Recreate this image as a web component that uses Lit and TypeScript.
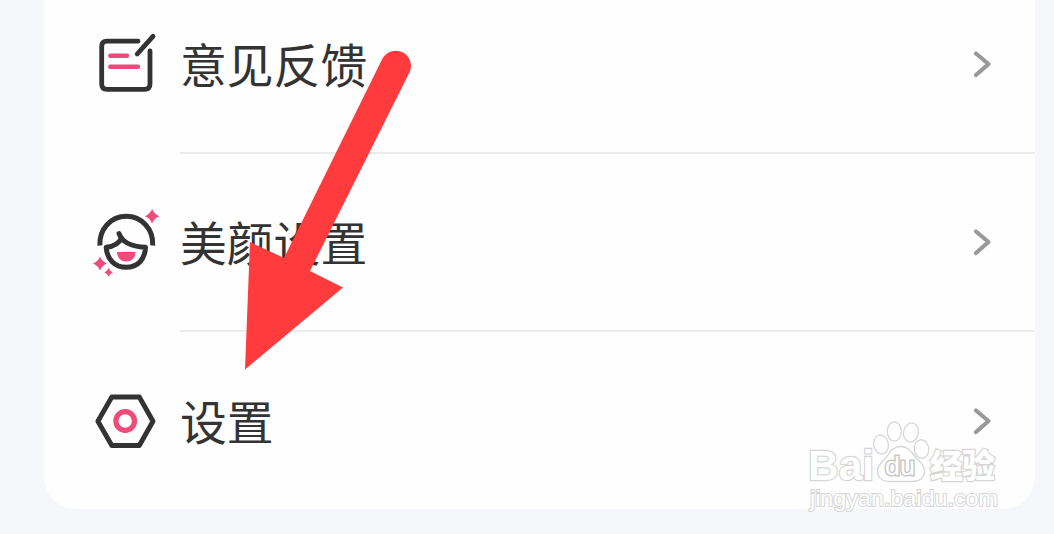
import { LitElement, html, css, svg } from "lit";
import { customElement, property } from "lit/decorators.js";

const feedbackIcon = svg`
    <g fill="none" stroke-width="4.800" stroke-linecap="round" stroke-linejoin="round">
        <path stroke="#333" d="M53 21.200H22Q16.700 21.200 16.700 26.500V64Q16.700 69.300 22 69.300H59.500Q65 69.300 65 64V31M68 16.300L52.200 34" />
        <path stroke="#e94c7c" stroke-width="4.400" d="M25.300 35.800H42M25.300 46.800H53" />
    </g>
`;

const beautyIcon = svg`
    <g fill="none" stroke="#333" stroke-width="5" stroke-linecap="round" stroke-linejoin="round">
        <path stroke-linecap="butt" d="M14.900 45.500C14 29 26 16.300 41.300 16.300S68.600 29 67.700 45.500" />
        <path d="M34 33.500C37 42 47 46.700 60.500 47.300C60 59 53 67.300 41.300 67.300S21.900 59 21.200 47.300C28 46.500 34 43.500 36.200 38.500" />
    </g>
    <g fill="#f04b7b">
        <path d="M32 52H50.500C50.300 58 46.500 61.500 41.300 61.500S32.300 58 32 52Z" />
        <path d="M67.100 9Q69.200 14.100 74.300 16.200Q69.200 18.300 67.100 23.400Q65 18.300 59.900 16.200Q65 14.100 67.100 9Z" />
        <path d="M15 56.600Q17 61.600 21.800 63.600Q17 65.600 15 70.600Q13 65.600 8 63.600Q13 61.600 15 56.600Z" />
        <path d="M23.600 68Q24.900 71 27.900 72.300Q24.900 73.600 23.600 76.600Q22.300 73.600 19.300 72.300Q22.300 71 23.600 68Z" />
    </g>
`;

const settingsIcon = svg`
    <g fill="none">
        <path stroke="#333" stroke-width="4.900" stroke-linejoin="round" d="M26.800 17H54.300L68 41.300L54.300 65.500H26.800L12.900 41.300Z" />
        <circle cx="40.200" cy="41" r="9.300" stroke="#f04b7b" stroke-width="5.200" />
    </g>
`;

@customElement("menu-row")
class MenuRow extends LitElement {
    @property() label = "";
    @property() box = "0 0 90 90";
    @property({ attribute: false }) icon: unknown;

    static styles = css`
        :host {
            display: flex;
            box-sizing: border-box;
            height: 178px;
            padding-left: 41px;
        }
        :host(:last-child) {
            margin-top: 1px;
        }
        .icon {
            flex: none;
            width: 90px;
            height: 90px;
            margin: 43px 5px 0 0;
        }
        .body {
            flex: 1;
            display: flex;
            align-items: center;
            justify-content: space-between;
            padding-right: 41px;
            border-bottom: 2px solid #ececec;
        }
        :host(:last-child) .body {
            border-bottom-color: transparent;
        }
        .label {
            font-size: 46.8px;
            line-height: 60px;
            padding-bottom: 2px;
            color: #333;
            white-space: nowrap;
        }
        .chevron {
            width: 24px;
            height: 32px;
        }
    `;

    render() {
        return html`
            <svg class="icon" viewBox=${this.box}>${this.icon}</svg>
            <div class="body">
                <span class="label">${this.label}</span>
                <svg class="chevron" viewBox="0 0 24 32">
                    <path d="M6 5.500L18.500 16L6 27" fill="none" stroke="#999" stroke-width="4.200" stroke-linecap="round" stroke-linejoin="round" />
                </svg>
            </div>
        `;
    }
}

@customElement("app-root")
class AppRoot extends LitElement {
    static styles = css`
        :host {
            display: block;
            position: relative;
            box-sizing: border-box;
            height: 534px;
            padding: 0 19px 25px 44px;
            overflow: hidden;
            background: #f5f7fb;
            font-family: "Noto Sans CJK SC", sans-serif;
        }
        .card {
            height: 509px;
            overflow: hidden;
            border-radius: 0 0 32px 32px;
            background: #fefefe;
        }
        .list {
            margin-top: -24px;
        }
        .overlay {
            position: absolute;
            inset: 0;
            width: 1054px;
            height: 534px;
            pointer-events: none;
        }
        .mark {
            fill: #fff;
            stroke: #d6d6d6;
            stroke-width: 1.3;
        }
        .mark text {
            font-family: "Liberation Sans", sans-serif;
            paint-order: stroke;
            stroke-width: 2.4;
        }
        .mark .brand {
            font-weight: bold;
            font-size: 43px;
        }
        .mark .cn {
            font-family: "Noto Sans CJK SC", sans-serif;
            font-weight: 900;
            font-size: 33px;
        }
        .mark .du {
            font-size: 26px;
            stroke: #c8c8c8;
            stroke-width: 3;
        }
        .mark .url {
            font-size: 22.5px;
            stroke-width: 2;
        }
    `;

    render() {
        return html`
            <div class="card">
                <div class="list">
                    <menu-row label="意见反馈" box="0 -1 90 90" .icon=${feedbackIcon}></menu-row>
                    <menu-row label="美颜设置" box="0 -3 90 90" .icon=${beautyIcon}></menu-row>
                    <menu-row label="设置" box="0 -4 90 90" .icon=${settingsIcon}></menu-row>
                </div>
            </div>
            ${this._watermark()}
            ${this._arrow()}
        `;
    }

    _watermark() {
        return html`
            <svg class="overlay" viewBox="0 0 1054 534">
                <g class="mark">
                    <text class="brand" x="808" y="480" textLength="66" lengthAdjust="spacingAndGlyphs">Bai</text>
                    <ellipse cx="881" cy="444.500" rx="7.300" ry="9.500" transform="rotate(-10 881 444.500)" />
                    <ellipse cx="894.300" cy="431.500" rx="7" ry="9.700" />
                    <ellipse cx="911" cy="432.500" rx="7.400" ry="9.600" transform="rotate(12 911 432.500)" />
                    <ellipse cx="921.500" cy="449" rx="7.300" ry="9.300" transform="rotate(-8 921.500 449)" />
                    <path d="M901 446.500C909 446.500 912 453 917 459C922 463 925 467 924.500 472C924 478 919 481.500 913 481.500H889C882 481.500 877 477 877.500 470C878 464 884 461 888 455C891 450 894 446.500 901 446.500Z" />
                    <text class="du" x="885" y="475" textLength="30" lengthAdjust="spacingAndGlyphs">du</text>
                    <text class="cn" x="930" y="478" textLength="65">经验</text>
                    <text class="url" x="810" y="506" textLength="188" lengthAdjust="spacingAndGlyphs">jingyan.baidu.com</text>
                </g>
            </svg>
        `;
    }

    _arrow() {
        return html`
            <svg class="overlay" viewBox="0 0 1054 534">
                <path fill="#ff3b3d" d="M245 369.500L250 242L284 258L382.500 58.500A15.200 15.200 0 0 1 409.700 72L310 271L343 287.500Z" />
            </svg>
        `;
    }
}
